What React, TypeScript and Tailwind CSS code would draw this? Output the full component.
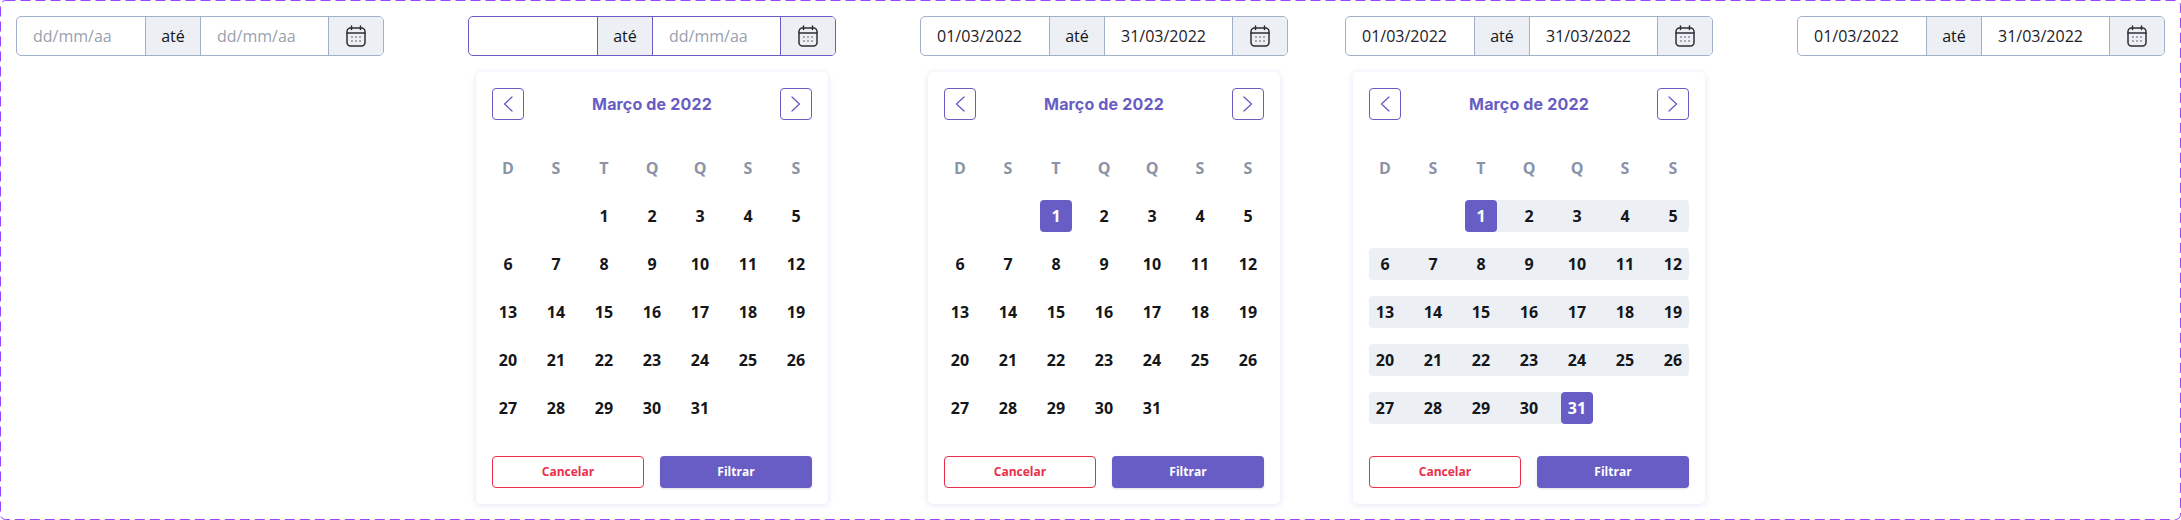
const MUTED = 'dd/mm/aa';

function CalIcon() {
  return (
    <svg width="20" height="22" viewBox="0 0 20 22" fill="none" stroke="#2b2f38" strokeWidth="1.5" strokeLinecap="round">
      <rect x="1" y="3" width="18" height="18" rx="3.5" />
      <path d="M1 8h18M5.500 1v3.500M14.500 1v3.500" />
      <g fill="#2b2f38" stroke="none">
        <circle cx="6" cy="12" r=".7" /><circle cx="10" cy="12" r=".7" /><circle cx="14" cy="12" r=".7" />
        <circle cx="6" cy="16" r=".7" /><circle cx="10" cy="16" r=".7" /><circle cx="14" cy="16" r=".7" />
      </g>
    </svg>
  );
}

function Field({ value, width, placeholder }: { value?: string; width: string; placeholder?: boolean }) {
  return (
    <div className={`${width} pl-4 flex items-center text-base ${placeholder ? 'text-[#99a1b0]' : 'text-[#1d2026]'}`}>
      {value}
    </div>
  );
}

function DateRange({ from, to, active }: { from?: string; to?: string; active?: boolean }) {
  const border = active ? 'border-[#675dc4]' : 'border-[#a2afc9]';
  return (
    <div className={`w-[368px] h-10 flex border rounded-[5px] overflow-hidden bg-white ${border}`}>
      <Field width="w-[128px]" value={from ?? MUTED} placeholder={from === undefined} />
      <div className={`w-[56px] border-x bg-[#eceff4] flex items-center justify-center text-base text-[#14161a] ${border}`}>até</div>
      <Field width="w-[127px]" value={to ?? MUTED} placeholder={to === undefined} />
      <div className={`flex-1 border-l bg-[#eceff4] flex items-center justify-center ${border}`}><CalIcon /></div>
    </div>
  );
}

function Nav({ dir }: { dir: 'l' | 'r' }) {
  return (
    <button className="w-8 h-8 rounded-[4px] border border-[#675dc4] flex items-center justify-center bg-white">
      <svg width="10" height="16" viewBox="0 0 10 16" fill="none" stroke="#675dc4" strokeWidth="1.3" strokeLinecap="round" strokeLinejoin="round">
        <path d={dir === 'l' ? 'M9 1 1.500 8 9 15' : 'M1 1 8.500 8 1 15'} />
      </svg>
    </button>
  );
}

const days = ['D', 'S', 'T', 'Q', 'Q', 'S', 'S'];

function Calendar({ start, end }: { start?: number; end?: number }) {
  const cells = [null, null, ...Array.from({ length: 31 }, (_, i) => i + 1)];
  return (
    <div className="mt-4 mx-2 w-[352px] h-[432px] bg-white rounded-[5px] p-4 shadow-[0_1px_6px_rgba(90,80,220,0.16)] flex flex-col">
      <div className="flex items-center justify-between h-8">
        <Nav dir="l" />
        <span className="text-[16px] font-bold tracking-[0.01em] text-[#675dc4] font-['Inter',sans-serif]">Março de 2022</span>
        <Nav dir="r" />
      </div>
      <div className="mt-10 grid grid-cols-[repeat(7,32px)] gap-x-4 h-4 items-center">
        {days.map((d, i) => (
          <div key={i} className="text-center text-base font-bold text-[#8a94a6] leading-4">{d}</div>
        ))}
      </div>
      <div className="mt-6 grid grid-cols-[repeat(6,48px)_32px] gap-y-4 auto-rows-[32px]">
        {cells.map((c, i) => {
          const col = i % 7;
          const inRange = c != null && start != null && end != null && c > start && c < end;
          const isEdge = c != null && (c === start || c === end);
          const isStart = c === start && end != null;
          const isEnd = c === end && end != null;
          const band = inRange
            ? `bg-[#eceff4] ${col === 0 ? 'rounded-l-[4px]' : ''} ${col === 6 ? 'rounded-r-[4px]' : ''}`
            : '';
          return (
            <div key={i} className={`relative h-8 ${band}`}>
              {isStart && <div className="absolute inset-y-0 left-4 right-0 bg-[#eceff4]" />}
              {c != null && (
                <div className={`relative w-8 h-8 flex items-center justify-center rounded-[4px] text-base font-bold ${isEdge ? 'bg-[#675dc4] text-white' : 'text-[#14161a]'} ${isEnd ? 'z-10' : ''}`}>
                  {c}
                </div>
              )}
            </div>
          );
        })}
      </div>
      <div className="mt-auto grid grid-cols-2 gap-4">
        <button className="h-8 rounded-[4px] border border-[#e8304a] text-[#e8304a] text-xs font-bold">Cancelar</button>
        <button className="h-8 rounded-[4px] bg-[#675dc4] text-white text-xs font-bold shadow-sm">Filtrar</button>
      </div>
    </div>
  );
}

export default function App() {
  return (
    <div className="relative w-[2181px] h-[520px] bg-white p-4 flex items-start font-['Open_Sans',sans-serif]">
      <svg className="absolute inset-0 pointer-events-none" width="2181" height="520">
        <rect x=".5" y=".5" width="2180" height="519" rx="5" fill="none" stroke="#9747ff" strokeDasharray="10 5" />
      </svg>
      <div><DateRange /></div>
      <div className="ml-[84px]">
        <DateRange from="" active />
        <Calendar />
      </div>
      <div className="ml-[84px]">
        <DateRange from="01/03/2022" to="31/03/2022" />
        <Calendar start={1} />
      </div>
      <div className="ml-[57px]">
        <DateRange from="01/03/2022" to="31/03/2022" />
        <Calendar start={1} end={31} />
      </div>
      <div className="ml-[84px]"><DateRange from="01/03/2022" to="31/03/2022" /></div>
    </div>
  );
}
